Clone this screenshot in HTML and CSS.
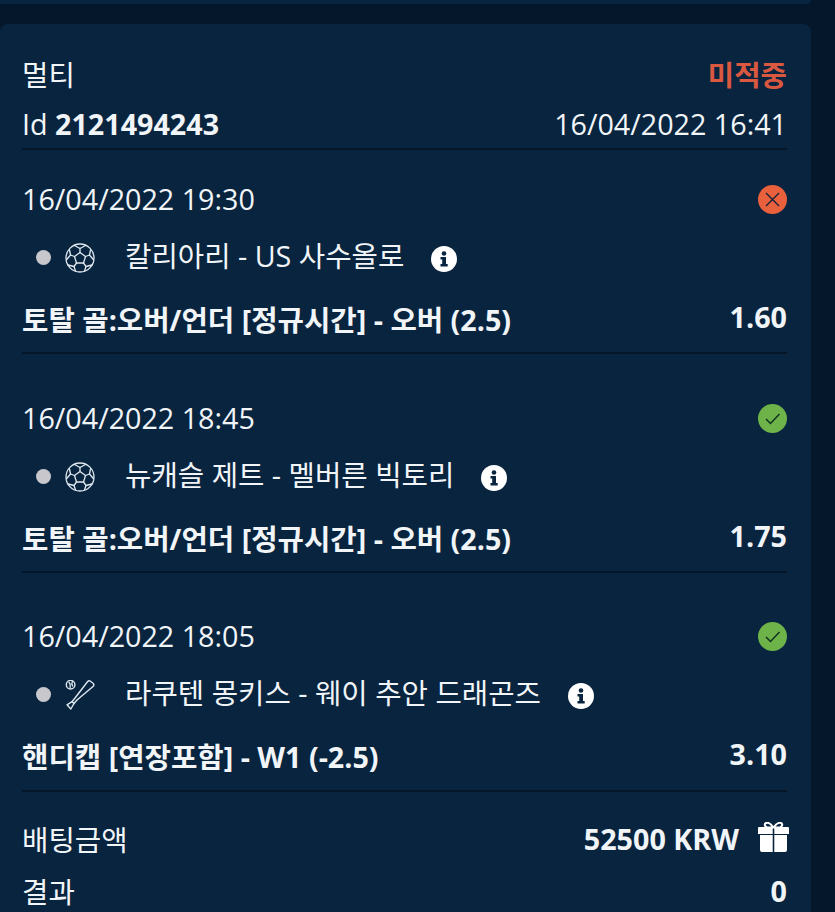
FILE: index.html
```html
<!DOCTYPE html>
<html lang="ko">
<head>
  <meta charset="UTF-8">
  <meta name="viewport" content="width=device-width, initial-scale=1.0">
  <title>멀티</title>
  <link rel="stylesheet" href="styles.css">
</head>
<body>
  <svg class="sprites" width="0" height="0">
    <symbol id="ball" viewBox="0 0 30 30">
      <g fill="none" stroke="#dfe8ef" stroke-width="1.3" stroke-linejoin="round" stroke-linecap="round">
        <circle cx="15" cy="15" r="14"/>
        <path d="M15 9.500l5.500 4-2 6.500h-7l-2-6.500z"/>
        <path d="M15 9.500V5.500M20.500 13.500l4-1.500M18.500 20l2.500 3.500M11.500 20L9 23.500M9.500 13.500l-4-1.500"/>
        <path d="M9.500 2.500L15 5.500l5.500-3M24.500 12l1-5M24.500 12l3.800 4.500M21 23.500l6-1.500M21 23.500l-1.500 4.500M9 23.500l1.500 4.500M9 23.500l-6-1.500M5.500 12l-3.800 4.500M5.500 12l-1-5"/>
      </g>
    </symbol>
    <symbol id="bat" viewBox="0 0 30 30">
      <g fill="none" stroke="#dfe8ef" stroke-width="1.400" stroke-linejoin="round" stroke-linecap="round">
        <circle cx="5.600" cy="4.700" r="4.300"/>
        <path d="M4 2.300c1.200 1.200 1.600 3 1.200 5M7.400 1.500c-.8 1.400-.6 3.200.2 4.500"/>
        <path d="M22.500 1.800c.8-1 2-1.200 3-.5l2.500 2c1 .8 1 2 .3 3L12 20l-3 3.500-2-1.800 3-3.700z"/>
        <path d="M7 21.700L2 24.800l3.800 4.200L9 23.500"/>
      </g>
    </symbol>
    <symbol id="info" viewBox="0 0 26 26">
      <circle cx="13" cy="13" r="13" fill="#fff"/>
      <circle cx="13" cy="7.500" r="2.300" fill="#08243f"/>
      <path d="M9.500 11h5.500v7h1.700v2.500H9.500V18h1.700v-4.500H9.500z" fill="#08243f"/>
    </symbol>
    <symbol id="lost" viewBox="0 0 29 29">
      <circle cx="14.500" cy="14.500" r="14.500" fill="#e8603c"/>
      <path d="M8 8l13 13M21 8L8 21" fill="none" stroke="#10233a" stroke-width="1.400"/>
    </symbol>
    <symbol id="won" viewBox="0 0 29 29">
      <circle cx="14.500" cy="14.500" r="14.500" fill="#6db34a"/>
      <path d="M8 15l4.500 4.500L21.500 10" fill="none" stroke="#10331f" stroke-width="1.500"/>
    </symbol>
    <symbol id="gift" viewBox="0 0 31 30">
      <g fill="#fff">
        <path d="M0 6a1 1 0 0 1 1-1h13.700v7H0zM16.300 5H30a1 1 0 0 1 1 1v6H16.300z"/>
        <path d="M2 13h12.700v17H4a2 2 0 0 1-2-2zM16.300 13H29v15a2 2 0 0 1-2 2H16.300z"/>
      </g>
      <path d="M15.500 5.500C13 2 10.500 0 8 1 6 2 6.500 4.500 9 5.500zM15.500 5.500C18 2 20.500 0 23 1c2 1 1.500 3.500-1 4.500z" fill="none" stroke="#fff" stroke-width="2"/>
    </symbol>
  </svg>

  <div class="top-card"></div>

  <div class="card">
    <div class="head">
      <div class="row">
        <span>멀티</span>
        <span class="status">미적중</span>
      </div>
      <div class="row">
        <span>Id <b>2121494243</b></span>
        <span>16/04/2022 16:41</span>
      </div>
    </div>

    <div class="leg">
      <div class="row leg-date">
        <span>16/04/2022 19:30</span>
        <svg class="result-icon"><use href="#lost"/></svg>
      </div>
      <div class="match">
        <span class="dot"></span>
        <svg class="sport"><use href="#ball"/></svg>
        <span class="teams">칼리아리 - US 사수올로</span>
        <svg class="info"><use href="#info"/></svg>
      </div>
      <div class="row market">
        <b>토탈 골:오버/언더 [정규시간] - 오버 (2.5)</b>
        <b class="odds">1.60</b>
      </div>
    </div>

    <div class="leg">
      <div class="row leg-date">
        <span>16/04/2022 18:45</span>
        <svg class="result-icon"><use href="#won"/></svg>
      </div>
      <div class="match">
        <span class="dot"></span>
        <svg class="sport"><use href="#ball"/></svg>
        <span class="teams">뉴캐슬 제트 - 멜버른 빅토리</span>
        <svg class="info"><use href="#info"/></svg>
      </div>
      <div class="row market">
        <b>토탈 골:오버/언더 [정규시간] - 오버 (2.5)</b>
        <b class="odds">1.75</b>
      </div>
    </div>

    <div class="leg leg-last">
      <div class="row leg-date">
        <span>16/04/2022 18:05</span>
        <svg class="result-icon"><use href="#won"/></svg>
      </div>
      <div class="match">
        <span class="dot"></span>
        <svg class="sport"><use href="#bat"/></svg>
        <span class="teams">라쿠텐 몽키스 - 웨이 추안 드래곤즈</span>
        <svg class="info"><use href="#info"/></svg>
      </div>
      <div class="row market">
        <b>핸디캡 [연장포함] - W1 (-2.5)</b>
        <b class="odds">3.10</b>
      </div>
    </div>

    <div class="totals">
      <div class="row">
        <span>배팅금액</span>
        <span class="amount"><b>52500 KRW</b><svg class="gift"><use href="#gift"/></svg></span>
      </div>
      <div class="row">
        <span>결과</span>
        <b>0</b>
      </div>
    </div>
  </div>
</body>
</html>
```

FILE: styles.css
```css
body {
  margin: 0;
  height: 912px;
  overflow: hidden;
  background: #05172b;
  color: #f1f5f8;
  font-family: "Open Sans", "Noto Sans CJK KR", sans-serif;
  font-size: 28.7px;
}

b {
  font-weight: 700;
}

.sprites {
  display: block;
}

.top-card {
  width: 811px;
  height: 4px;
  background: #08243f;
  border-radius: 0 0 8px 0;
}

.card {
  width: 811px;
  margin-top: 20px;
  padding: 24px 24px 0 22px;
  box-sizing: border-box;
  background: #08243f;
  border-radius: 8px 8px 0 0;
}

.row {
  display: flex;
  justify-content: space-between;
  align-items: center;
}

.head {
  border-bottom: 2px solid #051628;
}

.head .row {
  height: 50px;
}

.status {
  color: #d9583f;
  font-weight: 700;
}

.leg {
  height: 219px;
  box-sizing: border-box;
  padding-top: 45px;
  border-bottom: 2px solid #051628;
}

.head + .leg {
  height: 204px;
  padding-top: 30px;
}

.leg-last {
  padding-top: 44px;
}

.leg-date {
  height: 36px;
}

.result-icon {
  width: 29px;
  height: 29px;
  margin-top: 2px;
}

.match {
  display: flex;
  align-items: center;
  height: 36px;
  margin-top: 22px;
}

.dot {
  width: 15px;
  height: 15px;
  margin: 3px 0 0 14px;
  border-radius: 50%;
  background: #c8c8cc;
}

.sport {
  width: 30px;
  height: 30px;
  margin: 3px 0 0 14px;
}

.teams {
  margin: -3px 0 0 30px;
}

.info {
  width: 26px;
  height: 26px;
  margin: 5px 0 0 27px;
}

.market {
  height: 36px;
  margin-top: 26px;
}

.odds {
  margin-top: -4px;
}

.totals {
  padding-top: 20px;
}

.totals .row {
  height: 52px;
}

.amount {
  display: flex;
  align-items: center;
}

.gift {
  width: 31px;
  height: 30px;
  margin: -2px -2px 0 19px;
}
```
